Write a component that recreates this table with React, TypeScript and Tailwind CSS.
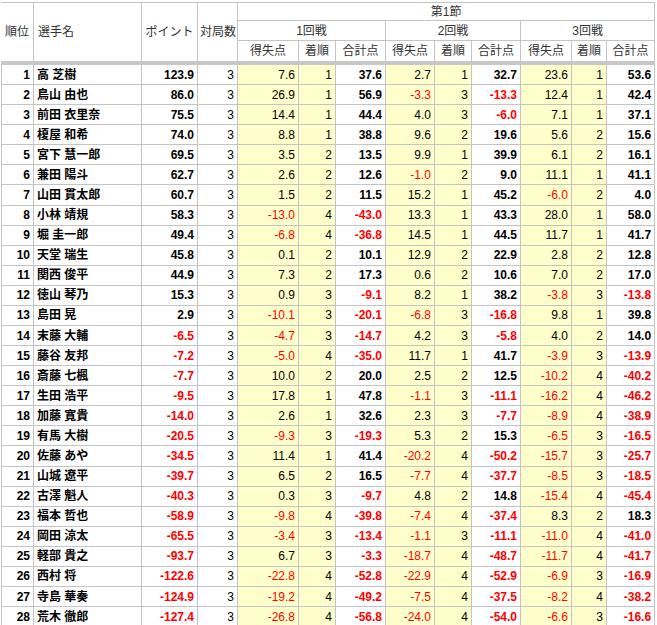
import React from 'react';

type Game = [string, string, string];
type Row = [number, string, string, Game, Game, Game];

const rows: Row[] = [
  [1, '高 芝樹', '123.9', ['7.6', '1', '37.6'], ['2.7', '1', '32.7'], ['23.6', '1', '53.6']],
  [2, '鳥山 由也', '86.0', ['26.9', '1', '56.9'], ['-3.3', '3', '-13.3'], ['12.4', '1', '42.4']],
  [3, '前田 衣里奈', '75.5', ['14.4', '1', '44.4'], ['4.0', '3', '-6.0'], ['7.1', '1', '37.1']],
  [4, '榎屋 和希', '74.0', ['8.8', '1', '38.8'], ['9.6', '2', '19.6'], ['5.6', '2', '15.6']],
  [5, '宮下 慧一郎', '69.5', ['3.5', '2', '13.5'], ['9.9', '1', '39.9'], ['6.1', '2', '16.1']],
  [6, '兼田 陽斗', '62.7', ['2.6', '2', '12.6'], ['-1.0', '2', '9.0'], ['11.1', '1', '41.1']],
  [7, '山田 貫太郎', '60.7', ['1.5', '2', '11.5'], ['15.2', '1', '45.2'], ['-6.0', '2', '4.0']],
  [8, '小林 靖規', '58.3', ['-13.0', '4', '-43.0'], ['13.3', '1', '43.3'], ['28.0', '1', '58.0']],
  [9, '堀 圭一郎', '49.4', ['-6.8', '4', '-36.8'], ['14.5', '1', '44.5'], ['11.7', '1', '41.7']],
  [10, '天堂 瑞生', '45.8', ['0.1', '2', '10.1'], ['12.9', '2', '22.9'], ['2.8', '2', '12.8']],
  [11, '関西 俊平', '44.9', ['7.3', '2', '17.3'], ['0.6', '2', '10.6'], ['7.0', '2', '17.0']],
  [12, '徳山 琴乃', '15.3', ['0.9', '3', '-9.1'], ['8.2', '1', '38.2'], ['-3.8', '3', '-13.8']],
  [13, '島田 晃', '2.9', ['-10.1', '3', '-20.1'], ['-6.8', '3', '-16.8'], ['9.8', '1', '39.8']],
  [14, '末藤 大輔', '-6.5', ['-4.7', '3', '-14.7'], ['4.2', '3', '-5.8'], ['4.0', '2', '14.0']],
  [15, '藤谷 友邦', '-7.2', ['-5.0', '4', '-35.0'], ['11.7', '1', '41.7'], ['-3.9', '3', '-13.9']],
  [16, '斎藤 七楓', '-7.7', ['10.0', '2', '20.0'], ['2.5', '2', '12.5'], ['-10.2', '4', '-40.2']],
  [17, '生田 浩平', '-9.5', ['17.8', '1', '47.8'], ['-1.1', '3', '-11.1'], ['-16.2', '4', '-46.2']],
  [18, '加藤 寛貴', '-14.0', ['2.6', '1', '32.6'], ['2.3', '3', '-7.7'], ['-8.9', '4', '-38.9']],
  [19, '有馬 大樹', '-20.5', ['-9.3', '3', '-19.3'], ['5.3', '2', '15.3'], ['-6.5', '3', '-16.5']],
  [20, '佐藤 あや', '-34.5', ['11.4', '1', '41.4'], ['-20.2', '4', '-50.2'], ['-15.7', '3', '-25.7']],
  [21, '山城 遼平', '-39.7', ['6.5', '2', '16.5'], ['-7.7', '4', '-37.7'], ['-8.5', '3', '-18.5']],
  [22, '古澤 魁人', '-40.3', ['0.3', '3', '-9.7'], ['4.8', '2', '14.8'], ['-15.4', '4', '-45.4']],
  [23, '福本 哲也', '-58.9', ['-9.8', '4', '-39.8'], ['-7.4', '4', '-37.4'], ['8.3', '2', '18.3']],
  [24, '岡田 涼太', '-65.5', ['-3.4', '3', '-13.4'], ['-1.1', '3', '-11.1'], ['-11.0', '4', '-41.0']],
  [25, '軽部 貴之', '-93.7', ['6.7', '3', '-3.3'], ['-18.7', '4', '-48.7'], ['-11.7', '4', '-41.7']],
  [26, '西村 将', '-122.6', ['-22.8', '4', '-52.8'], ['-22.9', '4', '-52.9'], ['-6.9', '3', '-16.9']],
  [27, '寺島 華奏', '-124.9', ['-19.2', '4', '-49.2'], ['-7.5', '4', '-37.5'], ['-8.2', '4', '-38.2']],
  [28, '荒木 徹郎', '-127.4', ['-26.8', '4', '-56.8'], ['-24.0', '4', '-54.0'], ['-6.6', '3', '-16.6']],
];

const neg = (v: string) => (v.startsWith('-') ? 'text-[#ff0000]' : 'text-black');

const th = 'border-r border-b border-[#c4c4c4] font-normal text-[#333] px-[2px] align-middle whitespace-nowrap';
const cell = 'h-[20.08px] border-r border-b border-[#c4c4c4] px-[3px] py-0 align-middle whitespace-nowrap';
const sep = 'border-b-4 border-b-[#c8c8c8]';

const App: React.FC = () => {
  return (
    <div className="bg-white min-h-screen pt-[2px] pl-px font-['Liberation_Sans','Noto_Sans_CJK_JP',sans-serif] text-[12px] leading-[14px]">
      <table className="table-fixed border-separate border-spacing-0 w-[654px]">
        <colgroup>
          <col className="w-[33px]" />
          <col className="w-[108px]" />
          <col className="w-[56px]" />
          <col className="w-[40px]" />
          <col className="w-[61px]" />
          <col className="w-[37px]" />
          <col className="w-[50px]" />
          <col className="w-[49px]" />
          <col className="w-[37px]" />
          <col className="w-[49px]" />
          <col className="w-[51px]" />
          <col className="w-[35px]" />
          <col className="w-[48px]" />
        </colgroup>
        <thead>
          <tr className="h-[19px]">
            <th rowSpan={3} className={`${th} border-t ${sep} text-center`}>順位</th>
            <th rowSpan={3} className={`${th} border-t ${sep} text-left pl-[4px]`}>選手名</th>
            <th rowSpan={3} className={`${th} border-t ${sep} text-center`}>ポイント</th>
            <th rowSpan={3} className={`${th} border-t ${sep} text-center`}>対局数</th>
            <th colSpan={9} className={`${th} border-t text-center`}>第1節</th>
          </tr>
          <tr className="h-[20px]">
            <th colSpan={3} className={`${th} text-center`}>1回戦</th>
            <th colSpan={3} className={`${th} text-center`}>2回戦</th>
            <th colSpan={3} className={`${th} text-center`}>3回戦</th>
          </tr>
          <tr className="h-[24px]">
            {[0, 1, 2].map((g) => (
              <React.Fragment key={g}>
                <th className={`${th} ${sep} text-center`}>得失点</th>
                <th className={`${th} ${sep} text-center`}>着順</th>
                <th className={`${th} ${sep} text-center`}>合計点</th>
              </React.Fragment>
            ))}
          </tr>
        </thead>
        <tbody>
          {rows.map(([rank, name, point, g1, g2, g3]) => (
            <tr key={rank}>
              <td className={`${cell} border-l text-right font-bold text-black`}>{rank}</td>
              <td className={`${cell} text-left font-bold text-black`}>{name}</td>
              <td className={`${cell} text-right font-bold ${neg(point)}`}>{point}</td>
              <td className={`${cell} text-right text-black`}>3</td>
              {[g1, g2, g3].map((g, i) => (
                <React.Fragment key={i}>
                  <td className={`${cell} text-right bg-[#ffffcc] ${neg(g[0])}`}>{g[0]}</td>
                  <td className={`${cell} text-right bg-[#ffffcc] text-black`}>{g[1]}</td>
                  <td className={`${cell} text-right font-bold ${neg(g[2])}`}>{g[2]}</td>
                </React.Fragment>
              ))}
            </tr>
          ))}
        </tbody>
      </table>
    </div>
  );
};

export default App;
